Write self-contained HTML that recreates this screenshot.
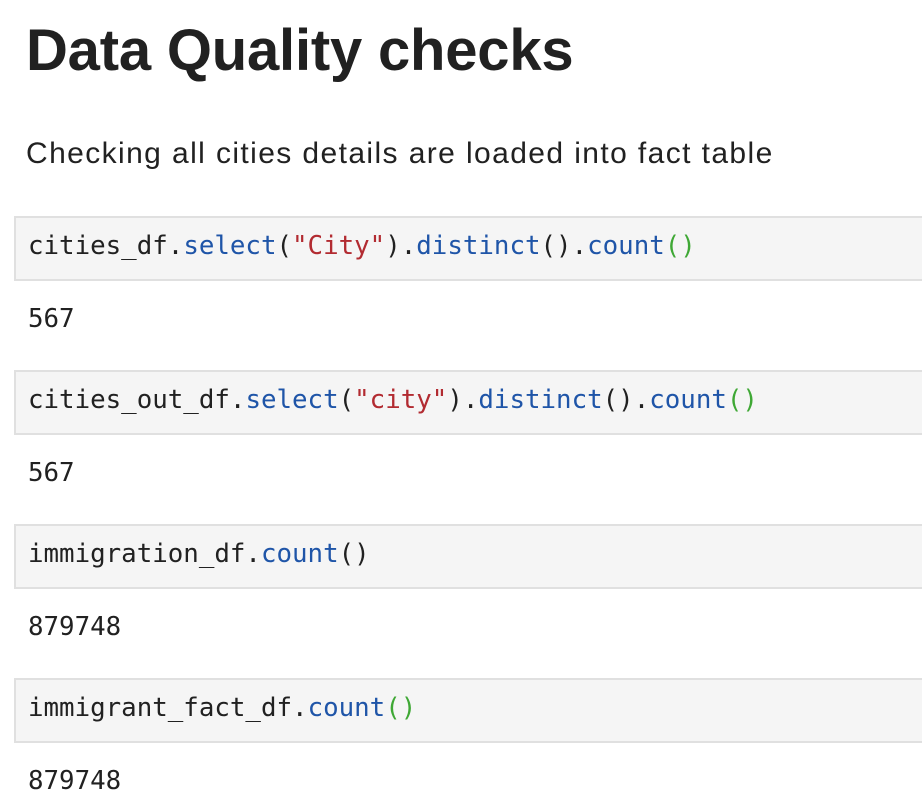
<!DOCTYPE html>
<html><head><meta charset="utf-8"><style>
body{margin:0;width:922px;height:810px;background:#fff;overflow:hidden;position:relative;font-family:"Liberation Sans",sans-serif;color:#212121}
.h{position:absolute;left:26px;top:17px;font-size:58px;font-weight:bold;white-space:nowrap;letter-spacing:-0.2px}
.p{position:absolute;left:26px;top:137px;font-size:30px;white-space:nowrap;letter-spacing:1.4px}
.c{position:absolute;left:14px;width:920px;height:61px;background:#f5f5f5;border:2px solid #e0e0e0;box-sizing:content-box}
.m{position:absolute;left:28px;font-family:"DejaVu Sans Mono","Liberation Mono",monospace;font-size:25.8px;white-space:nowrap;color:#212121}
.b{color:#1f55a8}.r{color:#b22b31}.g{color:#3fa835}
</style></head><body>
<div class="h">Data Quality checks</div>
<div class="p">Checking all cities details are loaded into fact table</div>

<div class="c" style="top:216px"></div>
<div class="m" style="top:231px">cities_df.<span class="b">select</span>(<span class="r">"City"</span>).<span class="b">distinct</span>().<span class="b">count</span><span class="g">()</span></div>
<div class="m" style="top:304px">567</div>

<div class="c" style="top:370px"></div>
<div class="m" style="top:385px">cities_out_df.<span class="b">select</span>(<span class="r">"city"</span>).<span class="b">distinct</span>().<span class="b">count</span><span class="g">()</span></div>
<div class="m" style="top:458px">567</div>

<div class="c" style="top:524px"></div>
<div class="m" style="top:539px">immigration_df.<span class="b">count</span>()</div>
<div class="m" style="top:612px">879748</div>

<div class="c" style="top:678px"></div>
<div class="m" style="top:693px">immigrant_fact_df.<span class="b">count</span><span class="g">()</span></div>
<div class="m" style="top:766px">879748</div>
</body></html>
